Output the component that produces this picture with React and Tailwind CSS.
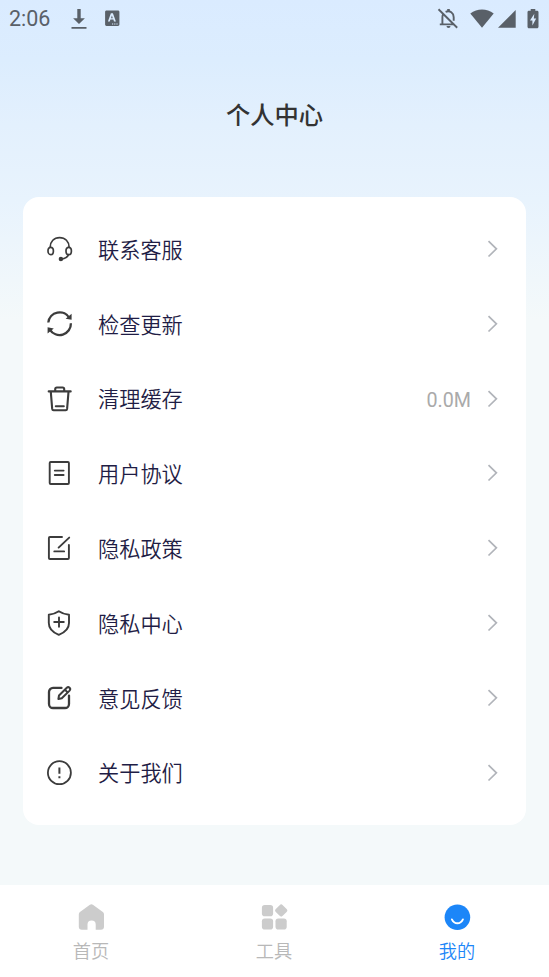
import { useState } from 'react'

const MENU = [
  { label: '联系客服', Icon: HeadsetIcon },
  { label: '检查更新', Icon: RefreshIcon },
  { label: '清理缓存', Icon: TrashIcon, value: '0.0M' },
  { label: '用户协议', Icon: DocIcon },
  { label: '隐私政策', Icon: PolicyIcon },
  { label: '隐私中心', Icon: ShieldIcon },
  { label: '意见反馈', Icon: FeedbackIcon },
  { label: '关于我们', Icon: AboutIcon },
]

const TABS = [
  { label: '首页', Icon: HomeIcon },
  { label: '工具', Icon: ToolsIcon },
  { label: '我的', Icon: SmileIcon },
]

function LineIcon({ width = 2, children }) {
  return (
    <svg viewBox="0 0 28 28" className="w-7 h-7 shrink-0 text-[#3c3c3c]" fill="none" stroke="currentColor" strokeWidth={width} strokeLinecap="round" strokeLinejoin="round">
      {children}
    </svg>
  )
}

function HeadsetIcon() {
  return (
    <LineIcon width={1.7}>
      <path d="M5.2 12.2C5.2 6.5 9 2.6 14.6 2.6s9.5 3.9 9.5 9.6" />
      <ellipse cx="5.7" cy="16" rx="2.7" ry="3.7" />
      <ellipse cx="23.7" cy="16" rx="2.7" ry="3.7" />
      <path d="M23.5 19.7c-1 2.4-3.5 4-7 4.4" />
      <circle cx="15.9" cy="24" r="1.4" fill="currentColor" />
    </LineIcon>
  )
}

function RefreshIcon() {
  return (
    <LineIcon width={2.3}>
      <path d="M3.3 12.5A11.4 11.4 0 0 1 24.6 8.2M25.9 13.2A11.4 11.4 0 0 1 4.8 19.6" strokeLinecap="butt" />
      <path d="M26.6 3.8v6l-6-1zM2.6 23.4v-6.2l6.2 1.4z" fill="currentColor" stroke="none" />
    </LineIcon>
  )
}

function TrashIcon() {
  return (
    <LineIcon width={2.1}>
      <path d="M3.7 6.4h22M10.2 6V4.2c0-1 .6-1.7 1.6-1.7h5.8c1 0 1.6.7 1.6 1.7V6M5.8 6.8l1.4 17.1c.1.8.6 1.3 1.4 1.3h12.1c.8 0 1.3-.5 1.4-1.3l1.4-17.1M10.8 21.3h8" />
    </LineIcon>
  )
}

function DocIcon() {
  return (
    <LineIcon width={1.9}>
      <rect x="4.7" y="3" width="19.2" height="22" rx="1" />
      <path d="M9.8 11.6h8.8M9.8 16h8.8" />
    </LineIcon>
  )
}

function PolicyIcon() {
  return (
    <LineIcon width={1.9}>
      <path d="M17 3H4.9c-.6 0-1 .4-1 1v20c0 .6.4 1 1 1h18c.6 0 1-.4 1-1V11M24.2 3.6 13.6 13.6M9.3 17.4h9.8" />
    </LineIcon>
  )
}

function ShieldIcon() {
  return (
    <LineIcon width={1.9}>
      <path d="M13.8 2.3C16.5 4.2 20 5.3 24 5.8v8.3c0 5.3-4.2 9.5-10.2 11.8C7.8 23.6 3.8 19.4 3.8 14.1V5.8c4-.5 7.3-1.6 10-3.5Z" />
      <path d="M9.2 13h9.6M14 8.4v9.3" />
    </LineIcon>
  )
}

function FeedbackIcon() {
  return (
    <LineIcon width={2.3}>
      <path d="M16.5 3.9H8a4 4 0 0 0-4 4V20a4 4 0 0 0 4 4h12a4 4 0 0 0 4-4v-8.4" />
      <path d="m13.4 15 .6-3.5 7.8-7.7c1.8-1.7 4.6.8 2.8 2.8l-7.8 7.7-3.4.7ZM20 5.8l2.6 2.6" strokeWidth="2" />
    </LineIcon>
  )
}

function AboutIcon() {
  return (
    <LineIcon width={1.8}>
      <circle cx="14.4" cy="13.7" r="11.5" />
      <path d="M14.4 8.4v6.4M14.4 17.3v1.9" strokeWidth="2" strokeLinecap="butt" />
    </LineIcon>
  )
}

function HomeIcon() {
  return (
    <svg viewBox="0 0 28 28" className="w-7 h-7" fill="currentColor">
      <path d="M12.9 1.7c1-.7 2-.7 3 0l9.6 7c1 .8 1.5 1.700 1.500 2.900v12.100c0 1.800-1.200 3-3 3h-5.300v-5.200a4.100 4.100 0 0 0-8.200 0v5.200H4.800c-1.800 0-3-1.200-3-3V11.600c0-1.200.5-2.100 1.500-2.900z" />
    </svg>
  )
}

function ToolsIcon() {
  return (
    <svg viewBox="0 0 28 28" className="w-7 h-7" fill="currentColor">
      <rect x="1.9" y="2" width="11.2" height="11.2" rx="2.8" />
      <rect x="1.9" y="15.4" width="11.2" height="11.2" rx="2.8" />
      <rect x="15.5" y="15.4" width="11.2" height="11.2" rx="2.8" />
      <rect x="16.3" y="2.6" width="9.8" height="9.8" rx="2.2" transform="rotate(45 21.2 7.5)" />
    </svg>
  )
}

function SmileIcon() {
  return (
    <svg viewBox="0 0 28 28" className="w-7 h-7">
      <circle cx="14.4" cy="14.2" r="12.8" fill="currentColor" />
      <path d="M8.9 16.400c2.400 5.200 8.600 5.200 11 0" fill="none" stroke="#fff" strokeWidth="1.9" strokeLinecap="round" />
    </svg>
  )
}

function StatusBar() {
  return (
    <div className="h-[37px] px-[9px] flex items-center text-[#596068] font-['Roboto',sans-serif]">
      <span className="w-[60px] pt-px text-[21.5px] leading-none">2:06</span>
      <svg viewBox="0 0 20 24" className="w-5 h-6" fill="currentColor">
        <path d="M8.3 2h3.4v9.2h4.2L10 17.1l-5.9-5.9h4.2zM2.5 20h15v1.8h-15z" />
      </svg>
      <svg viewBox="0 0 20 20" className="w-5 h-5 ml-[13px]" fill="currentColor">
        <path fillRule="evenodd" d="M4.500 1.500h11.500c.8 0 1.400.6 1.400 1.400v12.700c0 .8-.6 1.400-1.400 1.400H4.500c-.8 0-1.400-.6-1.400-1.400V2.900c0-.8.6-1.400 1.400-1.400Zm4.400 2.800L5.900 12.400h1.900l.6-1.800h3l.6 1.800h1.900l-3-8.100zm1 2.200.9 2.700H9zM10 14.500v1.100h1.200v-1.100zm2.200 0v1.100h1.200v-1.100zm2.200 0v1.100h1.200v-1.100z" />
      </svg>
      <div className="ml-auto flex items-center">
        <svg viewBox="0 0 22 22" className="w-[22px] h-[22px] mr-px" fill="none" stroke="currentColor" strokeWidth="1.9">
          <path d="M1.5 1.2 20.2 19.7M5.9 6.7c-.4.9-.5 1.800-.5 2.800v6.100M2.800 16.400h13.900M8.600 3.800c4.400-1.900 8.100 1.200 8.100 5.400v3.500" />
          <path d="M11.500 3.500V1" strokeWidth="2.6" />
          <path d="M9.500 18.100h4a2 2 0 0 1-4 0Z" fill="currentColor" stroke="none" />
        </svg>
        <svg viewBox="0 0 24 20" className="w-6 h-5 ml-[10px]" fill="currentColor">
          <path d="M12 18.700.3 4.400C7.300-.9 16.700-.9 23.700 4.400z" />
        </svg>
        <svg viewBox="0 0 18 18" className="w-[18px] h-[18px] ml-[4px]" fill="currentColor">
          <path d="M17.700 0v17.700H0z" />
        </svg>
        <svg viewBox="0 0 12 20" className="w-3 h-5 ml-[11px] mr-px" fill="currentColor">
          <path fillRule="evenodd" d="M3.700 0h4.600v1.700H10c.9 0 1.500.6 1.500 1.400v14.600c0 .9-.6 1.500-1.500 1.500H2c-.9 0-1.500-.6-1.500-1.500V3.100c0-.8.6-1.400 1.500-1.400h1.700zM7.300 4.700 3 11.500h2.400v4.900L9.200 9.500H6.800z" />
        </svg>
      </div>
    </div>
  )
}

function MenuRow({ label, value, Icon }) {
  return (
    <button className="w-full h-[74.8px] pl-[22px] pr-[28px] flex items-center cursor-pointer">
      <Icon />
      <span className="ml-[25px] pb-px text-[21.2px] leading-none font-[350] text-[#1f1d45]">{label}</span>
      {value && <span className="ml-auto mr-[16px] pt-[4px] text-[19.7px] leading-none text-[#aaa] font-['Roboto',sans-serif]">{value}</span>}
      <svg viewBox="0 0 11 18" className={`w-[11px] h-[18px] ${value ? '' : 'ml-auto'}`} fill="none" stroke="#b1b4ba" strokeWidth="1.7">
        <path d="m1.5 1.100 7.900 7.700-7.900 7.700" />
      </svg>
    </button>
  )
}

export default function App() {
  const [tab, setTab] = useState('我的')

  return (
    <div className="w-full h-[977px] flex flex-col overflow-hidden bg-[linear-gradient(180deg,#daebff_0px,#dcedfe_60px,#e3f0fd_125px,#e8f3fd_200px,#f4f9fa_320px)] font-['Noto_Sans_CJK_SC',sans-serif]">
      <StatusBar />
      <h1 className="h-[160px] pb-[5px] flex items-center justify-center text-[24.3px] leading-none font-medium text-[#333]">个人中心</h1>

      <main className="mx-[23px] h-[628px] pt-[14.6px] rounded-[16px] bg-white">
        {MENU.map(item => <MenuRow key={item.label} {...item} />)}
      </main>

      <nav className="mt-auto h-[92px] pt-[18px] grid grid-cols-3 items-start bg-white">
        {TABS.map(({ label, Icon }) => (
          <button
            key={label}
            onClick={() => setTab(label)}
            className={`pr-px flex flex-col items-center cursor-pointer ${tab === label ? 'text-[#1c86f8]' : 'text-[#ccc]'}`}
          >
            <Icon />
            <span className={`mt-[10px] text-[18.2px] leading-none font-[350] ${tab === label ? '' : 'text-[#b8b8b8]'}`}>{label}</span>
          </button>
        ))}
      </nav>
    </div>
  )
}
